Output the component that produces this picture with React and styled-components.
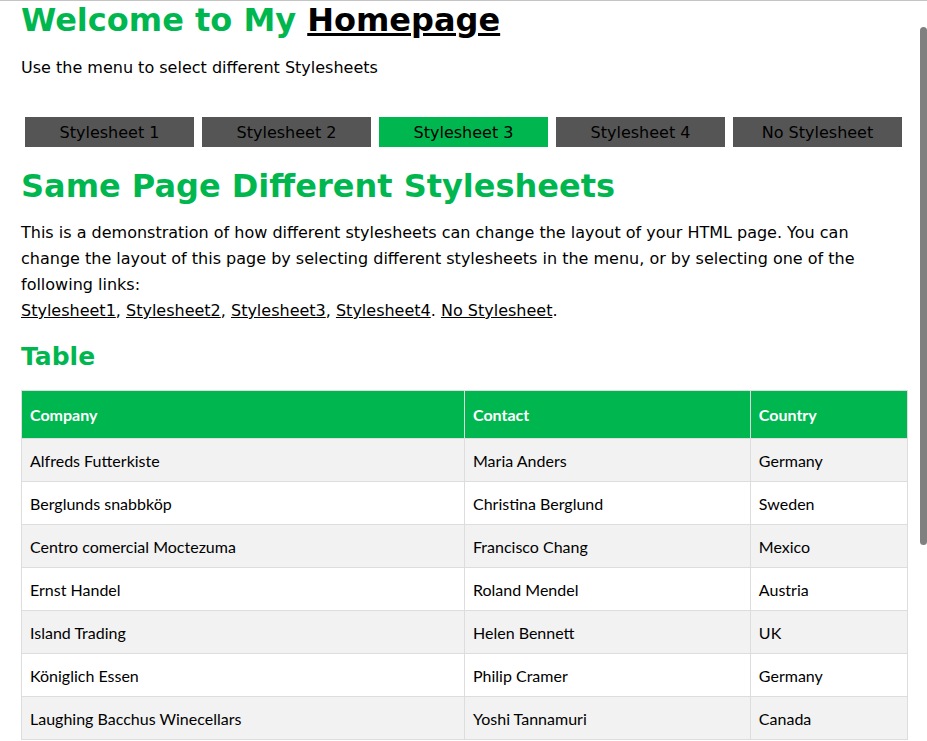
import React from 'react'
import styled, { createGlobalStyle } from 'styled-components'

const green = '#00b74f'

const GlobalStyle = createGlobalStyle`
  html, body {
    margin: 0;
    padding: 0;
    background: #fff;
  }
  body {
    font-family: "DejaVu Sans", Verdana, sans-serif;
    color: #000;
    box-shadow: inset 0 1px #c4c4c4;
  }
`

const links = ['Stylesheet1', 'Stylesheet2', 'Stylesheet3', 'Stylesheet4']
const menu = ['Stylesheet 1', 'Stylesheet 2', 'Stylesheet 3', 'Stylesheet 4', 'No Stylesheet']
const rows = [
  ['Alfreds Futterkiste', 'Maria Anders', 'Germany'],
  ['Berglunds snabbköp', 'Christina Berglund', 'Sweden'],
  ['Centro comercial Moctezuma', 'Francisco Chang', 'Mexico'],
  ['Ernst Handel', 'Roland Mendel', 'Austria'],
  ['Island Trading', 'Helen Bennett', 'UK'],
  ['Königlich Essen', 'Philip Cramer', 'Germany'],
  ['Laughing Bacchus Winecellars', 'Yoshi Tannamuri', 'Canada'],
]

export default function App() {
  return (
    <>
      <GlobalStyle />
      <Page>
        <Title>
          Welcome to My <a href="#">Homepage</a>
        </Title>
        <Intro>Use the menu to select different Stylesheets</Intro>

        <Menu>
          {menu.map((m, i) => (
            <MenuItem key={m} $active={i === 2}>
              {m}
            </MenuItem>
          ))}
        </Menu>

        <Heading>Same Page Different Stylesheets</Heading>
        <Text>
          This is a demonstration of how different stylesheets can change the layout of your HTML
          page. You can change the layout of this page by selecting different stylesheets in the
          menu, or by selecting one of the following links:
          <br />
          {links.map((l, i) => (
            <React.Fragment key={l}>
              <a href="#">{l}</a>
              {i < 3 ? ', ' : '. '}
            </React.Fragment>
          ))}
          <a href="#">No Stylesheet</a>.
        </Text>

        <SubHeading>Table</SubHeading>
        <Table>
          <thead>
            <tr>
              <Th style={{ width: '50%' }}>Company</Th>
              <Th>Contact</Th>
              <Th>Country</Th>
            </tr>
          </thead>
          <tbody>
            {rows.map((r) => (
              <Row key={r[0]}>
                {r.map((c) => (
                  <Td key={c}>{c}</Td>
                ))}
              </Row>
            ))}
          </tbody>
        </Table>
      </Page>
      <Scrollbar />
    </>
  )
}

const Page = styled.div`
  padding: 0 19px 0 21px;
`

const Title = styled.h1`
  margin: 0;
  font-size: 32px;
  line-height: 40px;
  font-weight: bold;
  color: ${green};

  & a {
    color: #000;
    text-decoration: underline;
  }
`

const Intro = styled.p`
  margin: 15px 0 0;
  font-size: 16px;
  line-height: 26px;
`

const Menu = styled.nav`
  display: flex;
  gap: 8px;
  padding: 0 6px 0 4px;
  margin-top: 36px;
`

const MenuItem = styled.div`
  flex: 1;
  height: 30px;
  display: flex;
  align-items: center;
  justify-content: center;
  font-size: 16px;
  color: #000;
  background: ${(p) => (p.$active ? green : '#555555')};
`

const Heading = styled.h2`
  margin: 19px 0 0;
  font-size: 32px;
  line-height: 40px;
  color: ${green};
`

const Text = styled.p`
  margin: 14px 0 0;
  font-size: 16px;
  line-height: 26px;

  & a {
    color: #000;
  }
`

const SubHeading = styled.h3`
  margin: 18px 0 0;
  font-size: 25px;
  line-height: 30px;
  color: ${green};
`

const Table = styled.table`
  margin-top: 18px;
  width: 100%;
  border-collapse: collapse;
  font-family: Lato, "Open Sans", sans-serif;
  font-size: 16px;
`

const Th = styled.th`
  text-align: left;
  background: ${green};
  color: #fff;
  font-weight: bold;
  height: 48px;
  box-sizing: border-box;
  padding: 0 8px;
  border: 1px solid #ddd;
`

const Row = styled.tr`
  background: #fff;

  &:nth-child(odd) {
    background: #f2f2f2;
  }
`

const Td = styled.td`
  height: 43px;
  box-sizing: border-box;
  padding: 0 8px;
  border: 1px solid #ddd;
`

const Scrollbar = styled.div`
  position: fixed;
  top: 27px;
  right: 0;
  width: 7px;
  height: 518px;
  border-radius: 4px;
  background: #808080;
`
